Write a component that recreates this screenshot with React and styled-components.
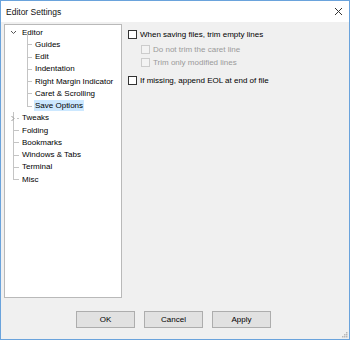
import React from "react";
import styled, { createGlobalStyle } from "styled-components";

const GlobalStyle = createGlobalStyle`
  html, body {
    margin: 0;
    padding: 0;
    background: #ffffff;
  }
  body {
    font-family: "Liberation Sans", Arial, sans-serif;
  }
`;

const Window = styled.div`
  width: 350px;
  height: 340px;
  box-sizing: border-box;
  border: 1px solid #6aa3dc;
  background: #f0f0f0;
  display: flex;
  flex-direction: column;
  font-size: 8px;
  color: #000;
  position: relative;
`;

const TitleBar = styled.div`
  height: 21px;
  background: #ffffff;
  display: flex;
  align-items: center;
  justify-content: space-between;
  padding: 0 6px 0 5px;
  flex-shrink: 0;
`;

const Title = styled.span`
  font-size: 8.5px;
  color: #111;
`;

const Body = styled.div`
  flex: 1;
  display: flex;
  padding: 2px 0 0 3px;
  gap: 6px;
`;

const TreePanel = styled.div`
  width: 118px;
  height: 274px;
  box-sizing: border-box;
  border: 1px solid #b9b9b9;
  background: #ffffff;
  padding: 1px 0 0 0;
`;

const TreeRow = styled.div`
  position: relative;
  height: 12.25px;
  display: flex;
  align-items: center;
  padding-left: ${(p) => p.indent}px;
`;

const Label = styled.span`
  line-height: 11px;
  padding: 0 1px;
  background: ${(p) => (p.selected ? "#cce8ff" : "transparent")};
  white-space: nowrap;
`;

const Guide = styled.span`
  position: absolute;
  left: ${(p) => p.x}px;
  top: ${(p) => p.top}px;
  height: ${(p) => p.h}px;
  border-left: 1px solid #c4c4c4;
`;

const Stub = styled.span`
  position: absolute;
  left: ${(p) => p.x}px;
  top: 6px;
  width: ${(p) => p.w}px;
  border-top: 1px solid #c4c4c4;
`;

const Expander = styled.span`
  position: absolute;
  left: ${(p) => p.x}px;
  top: 3px;
  width: 7px;
  height: 7px;
  display: flex;
  align-items: center;
  justify-content: center;
`;

const Options = styled.div`
  display: flex;
  flex-direction: column;
  padding-top: 4px;
`;

const CheckRow = styled.label`
  display: flex;
  align-items: center;
  gap: 2px;
  height: 12px;
  padding-left: ${(p) => (p.sub ? 13 : 0)}px;
  margin-top: ${(p) => p.mt || 0}px;
  color: ${(p) => (p.disabled ? "#9a9a9a" : "#000")};
  white-space: nowrap;
`;

const Box = styled.span`
  width: 9px;
  height: 9px;
  box-sizing: border-box;
  border: 1px solid ${(p) => (p.disabled ? "#cccccc" : "#333333")};
  background: ${(p) => (p.disabled ? "#f3f3f3" : "#ffffff")};
  flex-shrink: 0;
  margin-right: 1px;
`;

const Footer = styled.div`
  height: 41px;
  display: flex;
  justify-content: center;
  align-items: flex-start;
  gap: 9px;
  padding-left: 1px;
  box-sizing: border-box;
  padding-top: 13px;
  margin-right: 4px;
`;

const Button = styled.button`
  width: 59px;
  height: 17px;
  box-sizing: border-box;
  border: 1px solid #adadad;
  background: #e1e1e1;
  font-family: "Liberation Sans", Arial, sans-serif;
  font-size: 8px;
  color: #000;
  padding: 0;
`;

const Grip = styled.svg`
  position: absolute;
  right: 1px;
  bottom: 1px;
`;

const tree = [
  { label: "Editor", indent: 16, expander: "open" },
  { label: "Guides", indent: 29, child: true },
  { label: "Edit", indent: 29, child: true },
  { label: "Indentation", indent: 29, child: true },
  { label: "Right Margin Indicator", indent: 29, child: true },
  { label: "Caret & Scrolling", indent: 29, child: true },
  { label: "Save Options", indent: 29, child: true, selected: true, last: true },
  { label: "Tweaks", indent: 16, expander: "closed" },
  { label: "Folding", indent: 16 },
  { label: "Bookmarks", indent: 16 },
  { label: "Windows & Tabs", indent: 16 },
  { label: "Terminal", indent: 16 },
  { label: "Misc", indent: 16, lastTop: true },
];

const Chevron = ({ open }) => (
  <svg width="7" height="7" viewBox="0 0 7 7">
    {open ? (
      <path d="M1 2 L3.5 4.5 L6 2" fill="none" stroke="#555" strokeWidth="1" />
    ) : (
      <path d="M2.5 1 L5 3.5 L2.5 6" fill="none" stroke="#999" strokeWidth="1" />
    )}
  </svg>
);

const TreeItem = ({ item }) => (
  <TreeRow indent={item.indent}>
    {item.child && <Guide x={22} top={0} h={item.last ? 6 : 12.25} />}
    {item.child && <Stub x={22} w={5} />}
    {!item.child && !item.expander && <Stub x={8} w={6} />}
    {!item.child && item.label !== "Editor" && (
      <Guide x={8} top={0} h={item.lastTop ? 6 : 12.25} />
    )}
    {item.label === "Editor" && <Guide x={22} top={9} h={4} />}
    {item.expander && (
      <Expander x={item.expander === "open" ? 5 : 4}>
        <Chevron open={item.expander === "open"} />
      </Expander>
    )}
    {item.expander === "closed" && <Stub x={12} w={2} />}
    <Label selected={item.selected}>{item.label}</Label>
  </TreeRow>
);

const App = () => (
  <>
    <GlobalStyle />
    <Window>
      <TitleBar>
        <Title>Editor Settings</Title>
        <svg width="9" height="9" viewBox="0 0 9 9">
          <path d="M1 1 L8 8 M8 1 L1 8" stroke="#333" strokeWidth="1" />
        </svg>
      </TitleBar>
      <Body>
        <TreePanel>
          {tree.map((item) => (
            <TreeItem key={item.label} item={item} />
          ))}
        </TreePanel>
        <Options>
          <CheckRow>
            <Box />
            When saving files, trim empty lines
          </CheckRow>
          <CheckRow sub disabled mt={3}>
            <Box disabled />
            Do not trim the caret line
          </CheckRow>
          <CheckRow sub disabled mt={1}>
            <Box disabled />
            Trim only modified lines
          </CheckRow>
          <CheckRow mt={6}>
            <Box />
            If missing, append EOL at end of file
          </CheckRow>
        </Options>
      </Body>
      <Footer>
        <Button>OK</Button>
        <Button>Cancel</Button>
        <Button>Apply</Button>
      </Footer>
      <Grip width="7" height="7" viewBox="0 0 7 7">
        {[
          [5, 0],
          [5, 2],
          [3, 2],
          [5, 4],
          [3, 4],
          [1, 4],
        ].map(([x, y]) => (
          <rect key={`${x}-${y}`} x={x} y={y + 1} width="1.5" height="1.5" fill="#b8b8b8" />
        ))}
      </Grip>
    </Window>
  </>
);

export default App;
